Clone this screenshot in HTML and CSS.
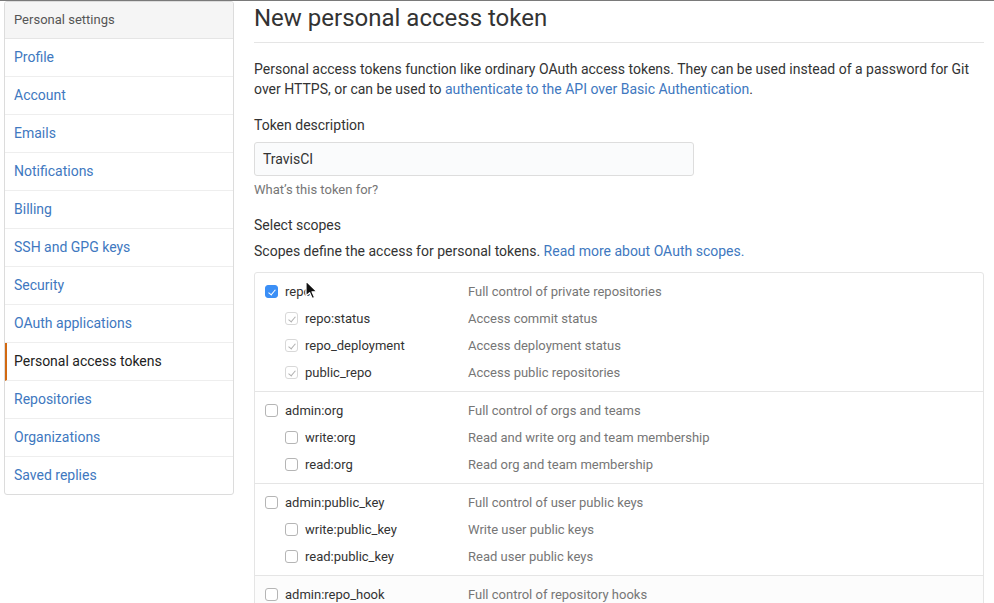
FILE: index.html
```html
<!DOCTYPE html>
<html lang="en">
<head>
<meta charset="utf-8">
<title>New personal access token</title>
<link rel="stylesheet" href="styles.css">
</head>
<body>
<div class="topline"></div>
<div class="layout">
  <nav class="menu">
    <div class="menu-heading">Personal settings</div>
    <a class="menu-item" href="#">Profile</a>
    <a class="menu-item" href="#">Account</a>
    <a class="menu-item" href="#">Emails</a>
    <a class="menu-item" href="#">Notifications</a>
    <a class="menu-item" href="#">Billing</a>
    <a class="menu-item" href="#">SSH and GPG keys</a>
    <a class="menu-item" href="#">Security</a>
    <a class="menu-item" href="#">OAuth applications</a>
    <a class="menu-item selected" href="#">Personal access tokens</a>
    <a class="menu-item" href="#">Repositories</a>
    <a class="menu-item" href="#">Organizations</a>
    <a class="menu-item" href="#">Saved replies</a>
  </nav>
  <main class="main">
    <h2 class="title">New personal access token</h2>
    <p class="intro">Personal access tokens function like ordinary OAuth access tokens. They can be used instead of a password for Git over HTTPS, or can be used to <a href="#">authenticate to the API over Basic Authentication</a>.</p>
    <div class="label">Token description</div>
    <div class="input">TravisCI</div>
    <div class="note">What’s this token for?</div>
    <div class="label label-scopes">Select scopes</div>
    <p class="scopes-desc">Scopes define the access for personal tokens. <a href="#">Read more about OAuth scopes.</a></p>
    <div class="scopes">
      <div class="group">
        <div class="row">
          <span class="name"><span class="cb checked"></span>repo</span>
          <span class="desc">Full control of private repositories</span>
          <svg class="cursor" width="13" height="20" viewBox="0 0 13 20"><path d="M1 1 L1 16 L4.6 12.6 L7.2 18.6 L9.6 17.6 L7 11.8 L12 11.8 Z" fill="#111" stroke="#fff" stroke-width="1.2" stroke-linejoin="round"/></svg>
        </div>
        <div class="row sub">
          <span class="name"><span class="cb dis"></span>repo:status</span>
          <span class="desc">Access commit status</span>
        </div>
        <div class="row sub">
          <span class="name"><span class="cb dis"></span>repo_deployment</span>
          <span class="desc">Access deployment status</span>
        </div>
        <div class="row sub">
          <span class="name"><span class="cb dis"></span>public_repo</span>
          <span class="desc">Access public repositories</span>
        </div>
      </div>
      <div class="group">
        <div class="row">
          <span class="name"><span class="cb"></span>admin:org</span>
          <span class="desc">Full control of orgs and teams</span>
        </div>
        <div class="row sub">
          <span class="name"><span class="cb"></span>write:org</span>
          <span class="desc">Read and write org and team membership</span>
        </div>
        <div class="row sub">
          <span class="name"><span class="cb"></span>read:org</span>
          <span class="desc">Read org and team membership</span>
        </div>
      </div>
      <div class="group">
        <div class="row">
          <span class="name"><span class="cb"></span>admin:public_key</span>
          <span class="desc">Full control of user public keys</span>
        </div>
        <div class="row sub">
          <span class="name"><span class="cb"></span>write:public_key</span>
          <span class="desc">Write user public keys</span>
        </div>
        <div class="row sub">
          <span class="name"><span class="cb"></span>read:public_key</span>
          <span class="desc">Read user public keys</span>
        </div>
      </div>
      <div class="group last">
        <div class="row">
          <span class="name"><span class="cb"></span>admin:repo_hook</span>
          <span class="desc">Full control of repository hooks</span>
        </div>
      </div>
    </div>
  </main>
</div>
</body>
</html>
```
FILE: styles.css
```css
html, body {
  margin: 0;
  padding: 0;
  background: #fff;
  overflow: hidden;
}
body {
  font-family: Roboto, "Liberation Sans", Arial, sans-serif;
  font-size: 14px;
  line-height: 20px;
  color: #333;
  height: 603px;
}
a {
  color: #4078c0;
  text-decoration: none;
}
.topline {
  height: 1px;
  background: #7a7a7a;
}
.layout {
  display: flex;
  gap: 20px;
  padding-left: 4px;
  align-items: flex-start;
}
.menu {
  width: 230px;
  flex: none;
  box-sizing: border-box;
  border: 1px solid #dcdcdc;
  border-radius: 3px;
  display: flex;
  flex-direction: column;
  overflow: hidden;
}
.menu-heading {
  height: 36px;
  line-height: 36px;
  padding-left: 9px;
  background: #f5f5f5;
  color: #555;
  font-size: 13px;
  border-bottom: 1px solid #e5e5e5;
}
.menu-item {
  height: 37px;
  line-height: 37px;
  padding-left: 9px;
  border-bottom: 1px solid #eee;
  font-size: 14px;
}
.menu-item:last-child {
  border-bottom: 0;
}
.menu-item.selected {
  color: #222;
  border-left: 2px solid #d26911;
  padding-left: 7px;
}
.main {
  width: 730px;
  flex: none;
}
.title {
  margin: 2px 0 0;
  font-size: 24px;
  line-height: 30px;
  font-weight: normal;
  color: #333;
  padding-bottom: 9px;
  border-bottom: 1px solid #e5e5e5;
}
.intro {
  margin: 16px 0 0;
}
.label {
  margin-top: 16px;
}
.input {
  margin-top: 7px;
  width: 440px;
  height: 34px;
  box-sizing: border-box;
  border: 1px solid #ddd;
  border-radius: 3px;
  background: #fafbfc;
  padding: 0 8px;
  line-height: 32px;
}
.note {
  margin-top: 5px;
  font-size: 13px;
  line-height: 18px;
  color: #767676;
}
.scopes-desc {
  margin: 6px 0 0;
}
.scopes {
  margin-top: 11px;
  border: 1px solid #e5e5e5;
  border-radius: 3px;
  box-sizing: border-box;
  font-size: 13px;
}
.group {
  padding: 5px 0 5px 10px;
  border-bottom: 1px solid #e5e5e5;
}
.group.last {
  border-bottom: 0;
  background: #fcfcfc;
}
.row {
  display: flex;
  align-items: center;
  height: 27px;
  position: relative;
}
.name {
  display: flex;
  align-items: center;
  width: 203px;
  flex: none;
  color: #333;
}
.row.sub .name {
  width: 183px;
  padding-left: 20px;
}
.desc {
  color: #767676;
}
.cb {
  width: 13px;
  height: 13px;
  box-sizing: border-box;
  border: 1px solid #b5b5b5;
  border-radius: 3px;
  background: #fff;
  margin-right: 7px;
  flex: none;
  position: relative;
}
.cb.checked {
  background: #3b8ff6;
  border-color: #3b8ff6;
}
.cb.checked::after,
.cb.dis::after {
  content: "";
  position: absolute;
  left: 3.5px;
  top: 1.5px;
  width: 3px;
  height: 6px;
  border-right: 1.6px solid #fff;
  border-bottom: 1.6px solid #fff;
  transform: rotate(40deg);
}
.cb.dis {
  border-color: #d8d8d8;
}
.cb.dis::after {
  border-color: #b0b0b0;
  border-right-width: 1.2px;
  border-bottom-width: 1.2px;
}
.cursor {
  position: absolute;
  left: 40px;
  top: 2px;
}
```
